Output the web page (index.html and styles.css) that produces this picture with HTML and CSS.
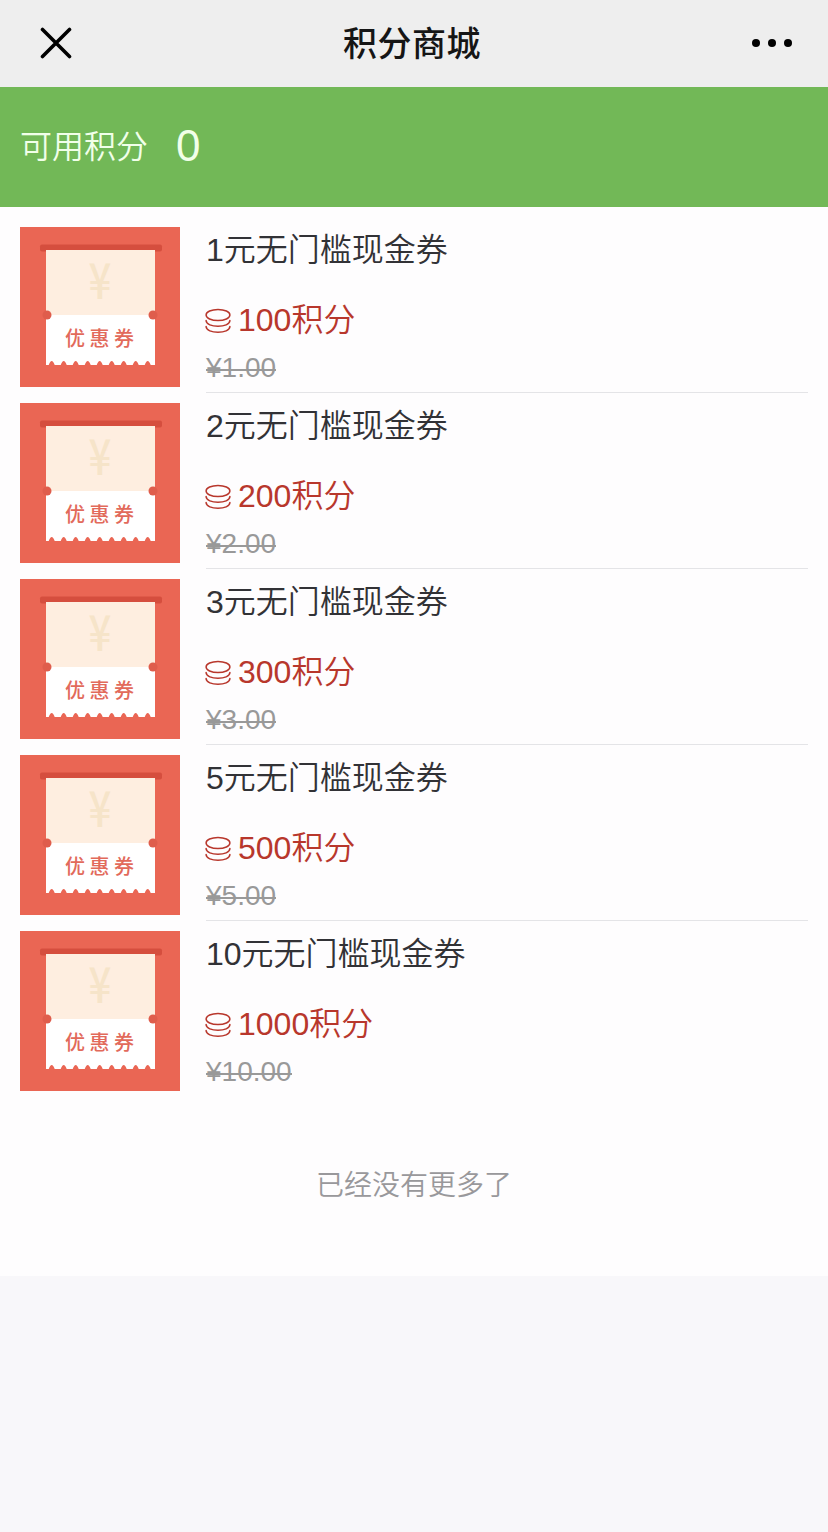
FILE: index.html
```html
<!DOCTYPE html>
<html lang="zh-CN">
<head>
    <meta charset="utf-8">
    <title>积分商城</title>
    <link rel="stylesheet" href="styles.css">
</head>
<body>
    <!-- SHARED ICONS -->
    <svg class="sprite" width="0" height="0">
        <symbol id="coins" viewBox="0 0 26 26">
            <g fill="none" stroke="currentColor" stroke-width="1.5" stroke-linecap="round">
                <ellipse cx="13" cy="7" rx="11.9" ry="5.6"/>
                <path d="M1.1 12.6c0 7.6 23.8 7.6 23.8 0"/>
                <path d="M1.1 18.6c0 7.6 23.8 7.6 23.8 0"/>
            </g>
        </symbol>
        <symbol id="coupon" viewBox="0 0 160 160">
            <rect width="160" height="160" fill="#ea6654"/>
            <rect x="20" y="17.5" width="122" height="7" rx="2" fill="#d54e3e"/>
            <rect x="26" y="23" width="109" height="65" fill="#feeee0"/>
            <path d="M26 88V138h2.7q3 -8 6 0h6q3 -8 6 0h6q3 -8 6 0h6q3 -8 6 0h6q3 -8 6 0h6q3 -8 6 0h6q3 -8 6 0h6q3 -8 6 0h6q3 -8 6 0h4.3V88z" fill="#fff"/>
            <circle cx="27" cy="88" r="4.5" fill="#df5d4c"/>
            <circle cx="133" cy="88" r="4.5" fill="#df5d4c"/>
        </symbol>
    </svg>

    <header class="navbar">
        <svg class="close" viewBox="0 0 32 32">
            <path d="M2.5 2.5L29.5 29.5M29.5 2.5L2.5 29.5" stroke="#000" stroke-width="3.6" stroke-linecap="round"/>
        </svg>
        <h1>积分商城</h1>
        <svg class="more" viewBox="0 0 40 8">
            <circle cx="4" cy="4" r="4"/>
            <circle cx="20" cy="4" r="4"/>
            <circle cx="36" cy="4" r="4"/>
        </svg>
    </header>

    <section class="balance">
        <span class="balance-label">可用积分</span>
        <span class="balance-value">0</span>
    </section>

    <main class="goods">
        <ul class="goods-list">
            <li class="item">
                <svg class="thumb" viewBox="0 0 160 160"><use href="#coupon"/><text class="coupon-yen" x="80" y="58" text-anchor="middle">¥</text><text class="coupon-text" x="45" y="118.5">优惠券</text></svg>
                <div class="info">
                    <h2>1元无门槛现金券</h2>
                    <p class="points"><svg class="coins"><use href="#coins"/></svg>100积分</p>
                    <p class="price">¥1.00</p>
                </div>
            </li>
            <li class="item">
                <svg class="thumb" viewBox="0 0 160 160"><use href="#coupon"/><text class="coupon-yen" x="80" y="58" text-anchor="middle">¥</text><text class="coupon-text" x="45" y="118.5">优惠券</text></svg>
                <div class="info">
                    <h2>2元无门槛现金券</h2>
                    <p class="points"><svg class="coins"><use href="#coins"/></svg>200积分</p>
                    <p class="price">¥2.00</p>
                </div>
            </li>
            <li class="item">
                <svg class="thumb" viewBox="0 0 160 160"><use href="#coupon"/><text class="coupon-yen" x="80" y="58" text-anchor="middle">¥</text><text class="coupon-text" x="45" y="118.5">优惠券</text></svg>
                <div class="info">
                    <h2>3元无门槛现金券</h2>
                    <p class="points"><svg class="coins"><use href="#coins"/></svg>300积分</p>
                    <p class="price">¥3.00</p>
                </div>
            </li>
            <li class="item">
                <svg class="thumb" viewBox="0 0 160 160"><use href="#coupon"/><text class="coupon-yen" x="80" y="58" text-anchor="middle">¥</text><text class="coupon-text" x="45" y="118.5">优惠券</text></svg>
                <div class="info">
                    <h2>5元无门槛现金券</h2>
                    <p class="points"><svg class="coins"><use href="#coins"/></svg>500积分</p>
                    <p class="price">¥5.00</p>
                </div>
            </li>
            <li class="item">
                <svg class="thumb" viewBox="0 0 160 160"><use href="#coupon"/><text class="coupon-yen" x="80" y="58" text-anchor="middle">¥</text><text class="coupon-text" x="45" y="118.5">优惠券</text></svg>
                <div class="info">
                    <h2>10元无门槛现金券</h2>
                    <p class="points"><svg class="coins"><use href="#coins"/></svg>1000积分</p>
                    <p class="price">¥10.00</p>
                </div>
            </li>
        </ul>
        <p class="no-more">已经没有更多了</p>
    </main>
</body>
</html>
```

FILE: styles.css
```css
* {
    box-sizing: border-box;
    margin: 0;
    padding: 0;
}
body {
    min-height: 1532px;
    background: #f8f7fa;
    color: #323236;
    font-family: "Liberation Sans", "Noto Sans CJK SC", sans-serif;
}
.sprite {
    display: block;
}
.navbar {
    display: flex;
    justify-content: space-between;
    align-items: center;
    height: 87px;
    padding: 0 36px 0 40px;
    background: #eeeeee;
}
.navbar h1 {
    font-size: 34px;
    line-height: 48px;
    font-weight: 500;
    letter-spacing: 0.5px;
    color: #151515;
}
.close {
    width: 32px;
    height: 32px;
    margin-bottom: 1px;
}
.more {
    width: 40px;
    height: 8px;
    margin-bottom: 1px;
}
.balance {
    display: flex;
    align-items: center;
    height: 120px;
    padding: 0 20px;
    background: #72b857;
    color: #f1ffe9;
}
.balance-label {
    padding-bottom: 6px;
    font-size: 32px;
    font-weight: 350;
}
.balance-value {
    margin-left: 28px;
    padding-bottom: 2px;
    font-size: 44px;
}
.goods {
    height: 1069px;
    padding: 10px 20px 0;
    background: #fefdfe;
}
.goods-list {
    list-style: none;
}
.item {
    display: flex;
    height: 176px;
}
.thumb {
    width: 160px;
    height: 160px;
    margin: 10px 26px 0 0;
}
.info {
    flex: 1;
    padding-top: 10px;
    border-bottom: 1px solid #e4e4e7;
}
.item:last-child .info {
    border-bottom: none;
}
.info h2 {
    font-size: 32px;
    line-height: 46px;
    font-weight: 350;
}
.points {
    display: flex;
    align-items: center;
    margin-top: 24px;
    font-size: 32px;
    line-height: 46px;
    font-weight: 350;
    color: #b8372c;
}
.coins {
    width: 26px;
    height: 26px;
    margin: 2px 7px 0 -1px;
}
/* strike line sits a little below the middle of the digits */
.price {
    width: fit-content;
    font-size: 28px;
    line-height: 50px;
    color: #999;
    background: linear-gradient(#999, #999) 0 26px / 100% 2px no-repeat;
}
.no-more {
    margin-top: 69px;
    font-size: 28px;
    line-height: 40px;
    font-weight: 350;
    text-align: center;
    color: #99989b;
}
.coupon-yen {
    font-family: "Noto Sans CJK SC", sans-serif;
    font-size: 40px;
    font-weight: 500;
    fill: #f6e4c9;
    transform: scaleY(1.25);
}
.coupon-text {
    font-family: "Noto Sans CJK SC", sans-serif;
    font-size: 20px;
    font-weight: 500;
    letter-spacing: 4.5px;
    fill: #e26a5b;
}
```
